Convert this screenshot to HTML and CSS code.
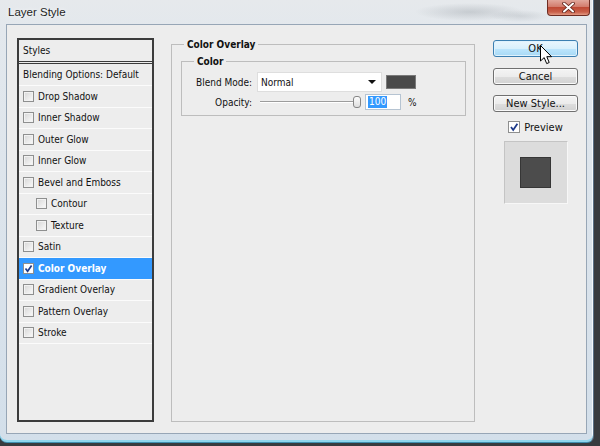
FILE: index.html
```html
<!DOCTYPE html>
<html lang="en">
<head>
    <meta charset="UTF-8">
    <title>Layer Style</title>
    <link rel="stylesheet" href="styles.css">
</head>
<body>
    <div class="window">
        <div class="titlebar">
            <span class="title">Layer Style</span>
            <span class="close">
                <svg width="13" height="11" viewBox="0 0 13 11">
                    <path d="M2 1.5 L11 9.5 M11 1.5 L2 9.5" stroke="#5a1f16" stroke-width="3.6" stroke-linecap="round"/>
                    <path d="M2 1.5 L11 9.5 M11 1.5 L2 9.5" stroke="#ffffff" stroke-width="2" stroke-linecap="round"/>
                </svg>
            </span>
        </div>

        <div class="client">
            <div class="styles-panel">
                <div class="panel-head">Styles</div>
                <div class="panel-blend">Blending Options: Default</div>
                <ul class="effects">
                    <li class="effect"><span class="box"></span>Drop Shadow</li>
                    <li class="effect"><span class="box"></span>Inner Shadow</li>
                    <li class="effect"><span class="box"></span>Outer Glow</li>
                    <li class="effect"><span class="box"></span>Inner Glow</li>
                    <li class="effect"><span class="box"></span>Bevel and Emboss</li>
                    <li class="effect sub"><span class="box"></span>Contour</li>
                    <li class="effect sub"><span class="box"></span>Texture</li>
                    <li class="effect"><span class="box"></span>Satin</li>
                    <li class="effect active">
                        <span class="box checked">
                            <svg width="9" height="9" viewBox="0 0 9 9"><path d="M1.5 4.5 L3.6 7.2 L7.6 1.5" fill="none" stroke="#1d3a8a" stroke-width="1.7"/></svg>
                        </span>Color Overlay
                    </li>
                    <li class="effect"><span class="box"></span>Gradient Overlay</li>
                    <li class="effect"><span class="box"></span>Pattern Overlay</li>
                    <li class="effect"><span class="box"></span>Stroke</li>
                </ul>
            </div>

            <fieldset class="group outer">
                <legend>Color Overlay</legend>
                <fieldset class="group inner">
                    <legend>Color</legend>
                    <div class="field">
                        <label class="field-label">Blend Mode:</label>
                        <div class="select">Normal<span class="arrow"></span></div>
                        <span class="swatch"></span>
                    </div>
                    <div class="field field-opacity">
                        <label class="field-label">Opacity:</label>
                        <div class="slider"><span class="thumb"></span></div>
                        <span class="num"><span class="num-sel">100</span></span>
                        <span class="unit">%</span>
                    </div>
                </fieldset>
            </fieldset>

            <div class="actions">
                <button class="btn btn-default">OK</button>
                <button class="btn">Cancel</button>
                <button class="btn">New Style...</button>
                <label class="preview-check">
                    <span class="box checked">
                        <svg width="10" height="10" viewBox="0 0 10 10"><path d="M2 5 L4.2 8 L8.4 1.8" fill="none" stroke="#1d3a8a" stroke-width="1.8"/></svg>
                    </span>Preview
                </label>
                <div class="preview"><div class="preview-square"></div></div>
            </div>
        </div>
    </div>

    <svg class="cursor" width="13" height="20" viewBox="0 0 13 20">
        <path d="M0.5 0.5 L0.5 16 L4.2 12.6 L6.7 18.6 L9.2 17.5 L6.8 11.7 L11.6 11.7 Z" fill="#ffffff" stroke="#000000" stroke-width="1"/>
    </svg>
</body>
</html>
```

FILE: styles.css
```css
* {
    box-sizing: border-box;
}
html, body {
    margin: 0;
}
body {
    position: relative;
    width: 600px;
    height: 446px;
    overflow: hidden;
    background: #383b3f;
    font-family: "DejaVu Sans Condensed", "Liberation Sans", sans-serif;
    font-size: 10px;
    color: #111111;
}
.window {
    width: 594px;
    height: 443px;
    background:
        radial-gradient(ellipse 55px 9px at 470px 12px, rgba(120, 128, 136, 0.28), transparent),
        radial-gradient(ellipse 30px 6px at 520px 16px, rgba(120, 128, 136, 0.2), transparent),
        linear-gradient(to bottom, #e6e9ec 0, #e3e8ed 30px, #d3dfea 100%);
    border-right: 1px solid #5b7187;
    border-bottom: 1px solid #3f8fb0;
    border-radius: 0 0 7px 7px;
    box-shadow: inset 0 -2px 0 #8fd6ee, inset -1px 0 0 #f4f8fb;
}
.titlebar {
    display: flex;
    justify-content: space-between;
    align-items: flex-start;
    height: 24px;
}
.title {
    padding: 5px 0 0 8px;
    font-family: "Liberation Sans", sans-serif;
    font-size: 11.5px;
    line-height: 14px;
    color: #1e1e1e;
    text-shadow: 0 0 4px #ffffff;
}
.close {
    display: flex;
    align-items: center;
    justify-content: center;
    width: 43px;
    height: 16px;
    margin-right: 3px;
    border: 1px solid #6e2c22;
    border-top: none;
    border-radius: 0 0 4px 4px;
    background: linear-gradient(to bottom, #e2a89c 0, #d27c6c 45%, #bf4a35 50%, #c9604a 80%, #e39a84 100%);
}
.client {
    display: flex;
    align-items: flex-start;
    width: 581px;
    height: 410px;
    margin-left: 6px;
    padding: 13px 8px 0 10px;
    border: 1px solid #97a6b6;
    background: #ededed;
}

/* styles list */
.styles-panel {
    width: 137px;
    height: 384px;
    border: 2px solid #3c3c3c;
}
.panel-head {
    height: 24px;
    padding-left: 4px;
    line-height: 21px;
    border-bottom: 3px double #3c3c3c;
}
.panel-blend {
    height: 22px;
    padding-left: 4px;
    line-height: 21px;
    border-bottom: 1px solid #fbfbfb;
}
.effects {
    list-style: none;
    margin: 0;
    padding: 0;
}
.effect {
    display: flex;
    align-items: center;
    gap: 4px;
    height: 21.5px;
    padding-left: 4px;
    border-bottom: 1px solid #fbfbfb;
}
.effect.sub {
    padding-left: 17px;
}
.effect.active {
    background: #3399ff;
    color: #ffffff;
    font-weight: bold;
}
.box {
    display: flex;
    align-items: center;
    justify-content: center;
    flex: none;
    width: 11px;
    height: 11px;
    border: 1px solid #8e8f8f;
    background: linear-gradient(135deg, #d6d6d6, #fbfbfb);
    box-shadow: inset 0 0 0 1px #f2f2f2;
}
.box.checked {
    background: #ffffff;
    box-shadow: none;
}

/* group boxes */
.group {
    margin: 0;
    border: 1px solid #bdbdbd;
    min-width: 0;
}
.group legend {
    padding: 0 3px;
    font-weight: bold;
    line-height: 13px;
}
.outer {
    width: 304px;
    height: 384px;
    margin-left: 17px;
    padding: 0 8px 0 9px;
}
.outer > legend {
    margin-left: 3px;
}
.inner {
    margin-top: 4px;
    padding: 4px 5px 5px 10px;
}
.inner > legend {
    margin-left: 2px;
}
.field {
    display: flex;
    align-items: center;
    height: 20px;
}
.field-opacity {
    height: 16px;
    margin-top: 2px;
}
.field-label {
    width: 60px;
    text-align: right;
}
.select {
    display: flex;
    align-items: center;
    width: 125px;
    height: 20px;
    margin-left: 5px;
    padding: 0 5px 0 3px;
    background: #ffffff;
    border: 1px solid #dedede;
}
.arrow {
    margin-left: auto;
    border-top: 4px solid #111111;
    border-left: 4px solid transparent;
    border-right: 4px solid transparent;
}
.swatch {
    width: 30px;
    height: 14px;
    margin-left: 4px;
    background: #4a4a4a;
    border: 1px solid #7a7a7a;
}
.slider {
    display: flex;
    align-items: center;
    justify-content: flex-end;
    width: 105px;
    height: 16px;
    margin-left: 5px;
    background:
        linear-gradient(#9c9c9c, #9c9c9c) no-repeat 3px 7px / 94px 1px,
        linear-gradient(#ffffff, #ffffff) no-repeat 3px 8px / 94px 1px;
}
.thumb {
    width: 8px;
    height: 12px;
    margin-right: 1px;
    border: 1px solid #868686;
    border-radius: 3px;
    background: linear-gradient(to bottom, #fdfdfd, #dedede);
}
.num {
    display: flex;
    align-items: center;
    width: 36px;
    height: 16px;
    margin-left: 3px;
    padding-left: 2px;
    background: #ffffff;
    border: 1px solid #b6c4d2;
}
.num-sel {
    padding: 0 1px;
    background: #3399ff;
    color: #ffffff;
    line-height: 12px;
}
.unit {
    margin-left: 7px;
}

/* buttons column */
.actions {
    display: flex;
    flex-direction: column;
    align-items: center;
    width: 85px;
    margin-left: 18px;
    padding-top: 2px;
}
.btn {
    width: 85px;
    height: 17px;
    margin: 0 0 10.5px;
    padding: 0;
    font-family: inherit;
    font-size: 11px;
    color: #111111;
    border: 1px solid #707070;
    border-radius: 3px;
    background: linear-gradient(to bottom, #f4f4f4 0, #ececec 50%, #dedede 50%, #d2d2d2 100%);
    box-shadow: inset 0 0 0 1px #fafafa;
}
.btn-default {
    border-color: #3c7fb1;
    background: linear-gradient(to bottom, #eaf6fd 0, #d9f0fc 50%, #bee6fd 50%, #a7d9f5 100%);
    box-shadow: inset 0 0 0 1px #dff2fd;
}
.preview-check {
    display: flex;
    align-items: center;
    gap: 4px;
    height: 12px;
    margin-top: -1.5px;
    font-size: 11px;
}
.preview-check .box {
    width: 12px;
    height: 12px;
}
.preview {
    display: flex;
    align-items: center;
    justify-content: center;
    width: 64px;
    height: 63px;
    margin-top: 8px;
    background: #dcdcdc;
    border: 1px solid;
    border-color: #c4c4c4 #f7f7f7 #f7f7f7 #c4c4c4;
}
.preview-square {
    width: 31px;
    height: 31px;
    background: #4c4c4c;
    border: 1px solid #363636;
}

.cursor {
    position: absolute;
    left: 540px;
    top: 45px;
}
```
